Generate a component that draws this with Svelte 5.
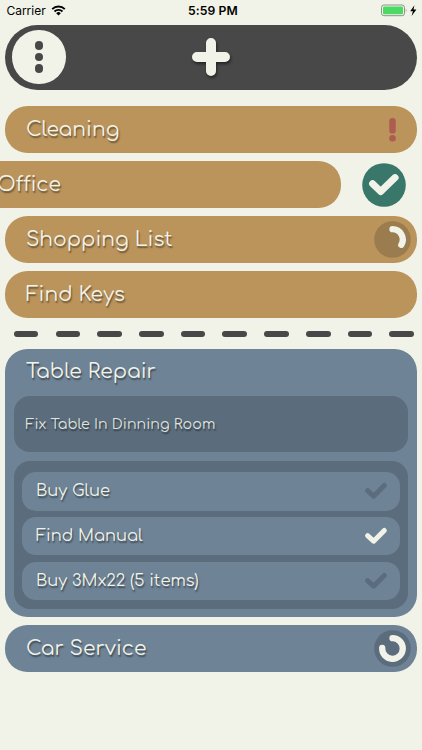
<script>
  const tasks = [
    { title: 'Cleaning', state: 'urgent' },
    { title: 'Office', state: 'swiped' },
    { title: 'Shopping List', state: 'started' },
    { title: 'Find Keys', state: '' }
  ];
  const steps = [
    { title: 'Buy Glue', done: false },
    { title: 'Find Manual', done: true },
    { title: 'Buy 3Mx22 (5 items)', done: false }
  ];
  const dashes = Array(10).fill(0);
</script>

<div class="screen">
  <div class="status">
    <div class="carrier">
      <span>Carrier</span>
      <svg width="15" height="11" viewBox="0 0 15 11">
        <path d="M1.2 4.1a9 9 0 0 1 12.6 0M3.5 6.5a5.7 5.7 0 0 1 8 0" fill="none" stroke="#000" stroke-width="1.9" />
        <path d="M5.2 8.2a3.3 3.3 0 0 1 4.6 0L7.5 10.6z" />
      </svg>
    </div>
    <span class="time">5:59 PM</span>
    <svg class="battery" width="37" height="13" viewBox="0 0 37 13">
      <rect x=".5" y="1" width="23" height="10.7" rx="2.4" fill="none" stroke="#909389" />
      <rect x="2" y="2.5" width="20" height="7.7" rx="1" fill="#4cd964" />
      <path d="M24.8 4.5q1.6 1.8 0 3.7z" fill="#909389" />
      <path d="M33.4 1.3 29.2 7.2h2.7L30.6 11.9l4.8-6.3h-2.9z" />
    </svg>
  </div>

  <header>
    <div class="menu"><i></i><i></i><i></i></div>
    <svg class="plus" width="50" height="50" viewBox="0 0 50 50">
      <path d="M25 11v28M11 25h28" />
    </svg>
  </header>

  <div class="list">
    {#each tasks as t}
      <div class="row" class:swiped={t.state === 'swiped'}>
        <div class="pill tan">
          <span class="title">{t.title}</span>
          {#if t.state === 'urgent'}
            <svg class="mark" width="37" height="37" viewBox="0 0 37 37">
              <path d="M18.5 10.2v9.2" stroke="#ac5c50" stroke-width="6.4" stroke-linecap="round" />
              <circle cx="18.5" cy="27.3" r="3.3" fill="#ac5c50" />
            </svg>
          {:else if t.state === 'started'}
            <svg class="mark" width="37" height="37" viewBox="0 0 37 37">
              <circle cx="18.5" cy="18.5" r="18.3" fill="#9b7c4e" />
              <path class="arc" d="M18.5 8.2A10.3 10.3 0 0 1 27.3 23.8" />
            </svg>
          {/if}
        </div>
        {#if t.state === 'swiped'}
          <svg class="done" width="44" height="44" viewBox="0 0 44 44">
            <circle cx="22" cy="22" r="21.8" fill="#39776a" />
            <path d="M10.6 20.8 18.7 28.6 33.1 14.6" fill="none" stroke="#f1f3e8" stroke-width="7" stroke-linecap="round" stroke-linejoin="round" />
          </svg>
        {/if}
      </div>
    {/each}
  </div>

  <div class="divider">
    {#each dashes as _}<i></i>{/each}
  </div>

  <section class="card">
    <div class="head"><span class="title">Table Repair</span></div>
    <div class="note">Fix Table In Dinning Room</div>
    <div class="steps">
      {#each steps as s}
        <div class="step">
          <span>{s.title}</span>
          <svg class:checked={s.done} width="24" height="20" viewBox="0 0 24 20">
            <path d="M3.6 9.7 9.6 15.2 20.3 4.5" />
          </svg>
        </div>
      {/each}
    </div>
  </section>

  <div class="pill blue">
    <span class="title">Car Service</span>
    <svg class="mark" width="37" height="37" viewBox="0 0 37 37">
      <circle cx="18.5" cy="18.5" r="18.3" fill="#5b6c7d" />
      <path class="arc" d="M18.5 8.2A10.3 10.3 0 1 1 8.2 17.8" />
    </svg>
  </div>
</div>

<style>
  :global(body) {
    margin: 0;
    background: #f1f3e8;
  }
  .screen {
    box-sizing: border-box;
    width: 422px;
    height: 750px;
    padding: 0 5.5px 0 5.4px;
    overflow: hidden;
    background: #f1f3e8;
    font-family: Comfortaa, Lato, sans-serif;
    font-weight: 400;
    color: #f1f3e8;
  }
  .status {
    display: grid;
    grid-template-columns: 1fr auto 1fr;
    align-items: center;
    height: 24.7px;
    box-sizing: border-box;
    padding: 0 0 3px 1px;
    font-family: Inter, sans-serif;
    font-size: 12px;
    color: #000;
  }
  .carrier {
    display: flex;
    align-items: center;
    gap: 5px;
  }
  .time {
    font-weight: 600;
    font-size: 12.2px;
    letter-spacing: 0.1px;
    margin-left: 3px;
  }
  .battery {
    justify-self: end;
    margin-right: -1.5px;
  }
  header {
    display: grid;
    grid-template-columns: 1fr auto 1fr;
    align-items: center;
    height: 65px;
    box-sizing: border-box;
    padding: 0 7px;
    border-radius: 33px;
    background: #484848;
  }
  .menu {
    display: flex;
    flex-direction: column;
    align-items: center;
    justify-content: center;
    gap: 3px;
    width: 53.4px;
    height: 53.4px;
    border-radius: 50%;
    background: #f1f3e8;
  }
  .menu i {
    width: 8.6px;
    height: 8.6px;
    border-radius: 50%;
    background: #484848;
  }
  .plus {
    filter: drop-shadow(1.5px 2px 1.5px rgba(0, 0, 0, 0.5));
  }
  .plus path {
    stroke: #f1f3e8;
    stroke-width: 10;
    stroke-linecap: round;
  }
  .list {
    display: flex;
    flex-direction: column;
    gap: 8.3px;
    margin-top: 16.7px;
  }
  .row {
    display: flex;
    align-items: center;
  }
  .row .pill {
    flex: 1;
  }
  .pill {
    display: flex;
    align-items: center;
    justify-content: space-between;
    box-sizing: border-box;
    height: 46.7px;
    padding: 0 5.8px 0 20.5px;
    border-radius: 22.5px;
  }
  .row.swiped {
    margin-left: -71px;
    margin-right: 10.5px;
    gap: 20.9px;
  }
  .row.swiped .pill {
    padding-left: 62.6px;
  }
  .tan {
    background: #bb945c;
  }
  .blue {
    margin-top: 8.3px;
    background: #6e8396;
  }
  .title {
    font-size: 20.3px;
    line-height: 28px;
    text-shadow: 1px 1.5px 1.5px rgba(0, 0, 0, 0.45);
    white-space: nowrap;
  }
  .arc {
    fill: none;
    stroke: #f1f3e8;
    stroke-width: 6.3;
    stroke-linecap: round;
  }
  .divider {
    display: flex;
    justify-content: space-between;
    margin: 12.8px 2.5px 11.5px 8.5px;
  }
  .divider i {
    width: 24.6px;
    height: 6.2px;
    border-radius: 3.1px;
    background: #484848;
  }
  .card {
    box-sizing: border-box;
    height: 268.6px;
    padding: 0 8.2px;
    border-radius: 22.5px;
    background: #6e8396;
  }
  .head {
    display: flex;
    align-items: center;
    height: 47.2px;
    padding-left: 12.3px;
  }
  .note {
    display: flex;
    align-items: center;
    height: 56.8px;
    padding-left: 12px;
    border-radius: 16px;
    background: #5b6c7d;
    color: #dfe3de;
    font-size: 14.25px;
    text-shadow: 1px 1.5px 1.5px rgba(0, 0, 0, 0.45);
  }
  .steps {
    display: flex;
    flex-direction: column;
    gap: 6.2px;
    height: 148.4px;
    box-sizing: border-box;
    margin-top: 8.2px;
    padding: 11.2px 8px 0;
    border-radius: 16px;
    background: #5b6c7d;
  }
  .step {
    display: flex;
    align-items: center;
    justify-content: space-between;
    height: 38.7px;
    padding: 0 12.5px 0 14.3px;
    border-radius: 14px;
    background: #6e8396;
    font-size: 16.3px;
    text-shadow: 1px 1.5px 1.5px rgba(0, 0, 0, 0.45);
  }
  .step path {
    fill: none;
    stroke: #5b6c7d;
    stroke-width: 5;
    stroke-linecap: round;
    stroke-linejoin: round;
  }
  .step .checked path {
    stroke: #f1f3e8;
  }
</style>
